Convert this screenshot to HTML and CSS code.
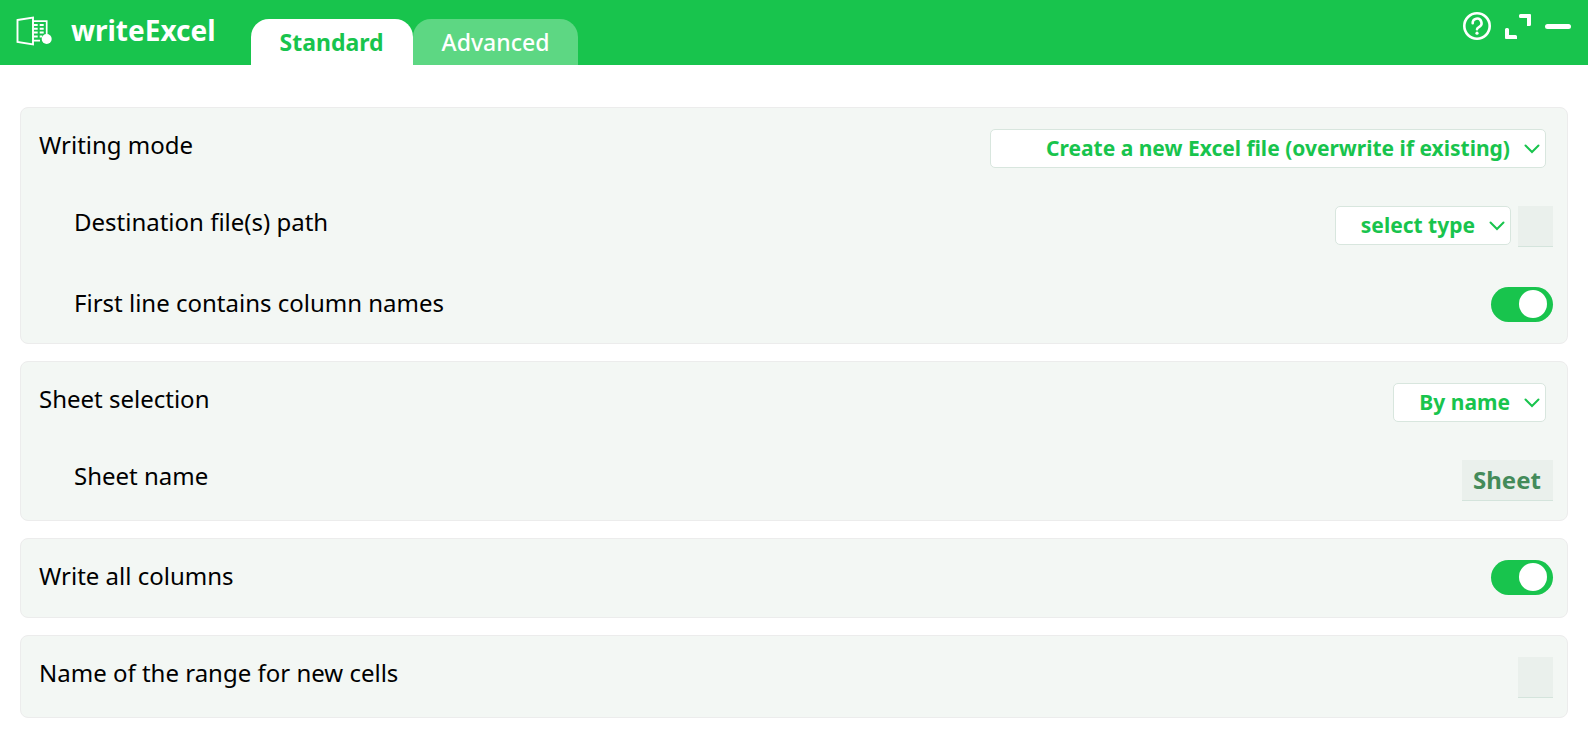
FILE: index.html
```html
<!DOCTYPE html>
<html lang="en">
<head>
    <meta charset="UTF-8">
    <meta name="viewport" content="width=device-width, initial-scale=1.0">
    <title>writeExcel</title>
    <link rel="stylesheet" href="styles.css">
</head>
<body>
    <header class="header">
        <svg class="logo" viewBox="0 0 36 30" width="36" height="30" fill="none" stroke="#fff" aria-hidden="true">
            <path d="M1.500 4 17 1.500v27L1.500 26z" stroke-width="1.900"/>
            <path d="M17 5.200h13.700V19M17 24.700h7" stroke-width="1.700"/>
            <path d="M17.700 9h4M23.700 9h4M17.700 12.800h4M23.700 12.800h4M17.700 16.600h4M23.700 16.600h4M17.700 20.500h4M23.700 20.500h2.500" stroke-width="2"/>
            <circle cx="30.700" cy="23" r="5" fill="#fff" stroke="none"/>
        </svg>
        <h1 class="title">writeExcel</h1>
        <nav class="tabs">
            <button type="button" class="tab active">Standard</button>
            <button type="button" class="tab">Advanced</button>
        </nav>
        <div class="actions">
            <button type="button" class="action" aria-label="Help">
                <svg viewBox="0 0 28 28" width="28" height="28" fill="none" stroke="#fff" stroke-linecap="round">
                    <circle cx="14" cy="14" r="12.700" stroke-width="2.600"/>
                    <path d="M9.700 11.200a4.400 4.400 0 1 1 6.600 3.600c-1.600.9-2.300 1.400-2.300 2.400" stroke-width="2.600"/>
                    <circle cx="14" cy="21.200" r="1.600" fill="#fff" stroke="none"/>
                </svg>
            </button>
            <button type="button" class="action" aria-label="Expand">
                <svg viewBox="0 0 26 26" width="26" height="26" fill="#fff">
                    <path d="M15.500 1H25q1 0 1 1v9.500q0 1.500-1.500 1.500H22V5h-6.500Q14 5 14 3.500v-1Q14 1 15.500 1z"/>
                    <path d="M1.500 15h1Q4 15 4 16.500V22h6.500q1.500 0 1.500 1.500V26H1q-1 0-1-1v-8.500Q0 15 1.500 15z"/>
                </svg>
            </button>
            <button type="button" class="action" aria-label="Minimize">
                <svg viewBox="0 0 26 26" width="26" height="26" fill="#fff">
                    <rect x="0" y="11" width="26" height="5" rx="2.500"/>
                </svg>
            </button>
        </div>
    </header>

    <form class="settings">
        <section class="card">
            <div class="row">
                <label for="writingMode">Writing mode</label>
                <select id="writingMode" class="select mode">
                    <option>Create a new Excel file (overwrite if existing)</option>
                </select>
            </div>
            <div class="row sub">
                <label for="pathType">Destination file(s) path</label>
                <div class="fields">
                    <select id="pathType" class="select type">
                        <option>select type</option>
                    </select>
                    <input type="text" class="text" aria-label="Path">
                </div>
            </div>
            <div class="row sub">
                <label for="firstLine">First line contains column names</label>
                <input type="checkbox" id="firstLine" class="toggle" checked>
            </div>
        </section>

        <section class="card">
            <div class="row">
                <label for="sheetSelection">Sheet selection</label>
                <select id="sheetSelection" class="select by">
                    <option>By name</option>
                </select>
            </div>
            <div class="row sub">
                <label for="sheetName">Sheet name</label>
                <input type="text" id="sheetName" class="text filled" value="Sheet">
            </div>
        </section>

        <section class="card">
            <div class="row">
                <label for="allColumns">Write all columns</label>
                <input type="checkbox" id="allColumns" class="toggle" checked>
            </div>
        </section>

        <section class="card">
            <div class="row">
                <label for="rangeName">Name of the range for new cells</label>
                <input type="text" id="rangeName" class="text">
            </div>
        </section>
    </form>
</body>
</html>
```

FILE: styles.css
```css
* {
    box-sizing: border-box;
}
body {
    margin: 0;
    background: #fff;
    color: #000;
    font-family: "Noto Sans", sans-serif;
    font-size: 24px;
    line-height: 32px;
}
button, input, select {
    font-family: inherit;
}

/* header */
.header {
    display: flex;
    align-items: flex-start;
    height: 65px;
    padding: 0 17px 0 16px;
    background: #18c44d;
}
.logo {
    margin-top: 16px;
}
.title {
    margin: 13px 35px 0 19px;
    color: #fff;
    font-size: 28px;
    line-height: 34px;
}
.tabs {
    display: flex;
    align-self: flex-end;
}
.tab {
    height: 46px;
    padding: 0 29px;
    border: 0;
    border-radius: 18px 18px 0 0;
    background: #5dd783;
    color: #fff;
    font-size: 23px;
    font-weight: 500;
    line-height: 46px;
    cursor: pointer;
}
.tab.active {
    background: #fff;
    color: #18c44d;
    font-weight: bold;
}
.actions {
    display: flex;
    align-items: center;
    gap: 14px;
    margin: 12px 0 0 auto;
}
.action {
    display: flex;
    padding: 0;
    border: 0;
    background: none;
    cursor: pointer;
}

/* settings */
.settings {
    display: flex;
    flex-direction: column;
    gap: 17px;
    padding: 42px 20px 14px;
}
.card {
    display: flex;
    flex-direction: column;
    gap: 38px;
    min-height: 80px;
    padding: 21px 14px 19px 18px;
    border: 1px solid #ececec;
    border-radius: 8px;
    background: #f3f7f4;
}
.row {
    display: flex;
    align-items: flex-start;
    justify-content: space-between;
}
.sub {
    padding-left: 35px;
}
.fields {
    display: flex;
    margin-bottom: 2px;
}
.select {
    height: 39px;
    margin: 0 7px 0 0;
    padding: 0 35px 2px 0;
    border: 1px solid #d8e6de;
    border-radius: 5px;
    appearance: none;
    background: #fff url("data:image/svg+xml,%3Csvg xmlns='http://www.w3.org/2000/svg' width='16' height='10' fill='none' stroke='%2318c44d' stroke-width='2' stroke-linecap='round'%3E%3Cpath d='M1.500 1.500 8 8l6.500-6.500'/%3E%3C/svg%3E") no-repeat right 5px center;
    color: #18c44d;
    font-size: 21px;
    font-weight: bold;
    text-align-last: right;
}
.mode {
    width: 556px;
}
.type {
    width: 176px;
}
.by {
    width: 153px;
}
.text {
    width: 35px;
    height: 41px;
    margin: 0;
    padding: 0 11px 2px;
    border: 0;
    border-bottom: 1px solid #d4e4dc;
    background: #eaf0ec;
    color: #448b5a;
    font-size: 24px;
    font-weight: bold;
}
.filled {
    width: 91px;
}
.toggle {
    width: 62px;
    height: 35px;
    margin: 0 0 2px;
    padding: 3px 6px;
    border-radius: 18px;
    appearance: none;
    background: #ccc;
    cursor: pointer;
}
.toggle::before {
    content: "";
    display: block;
    width: 28px;
    height: 28px;
    border-radius: 50%;
    background: #fff;
}
.toggle:checked {
    background: #18c44d;
}
.toggle:checked::before {
    margin-left: auto;
}
```
